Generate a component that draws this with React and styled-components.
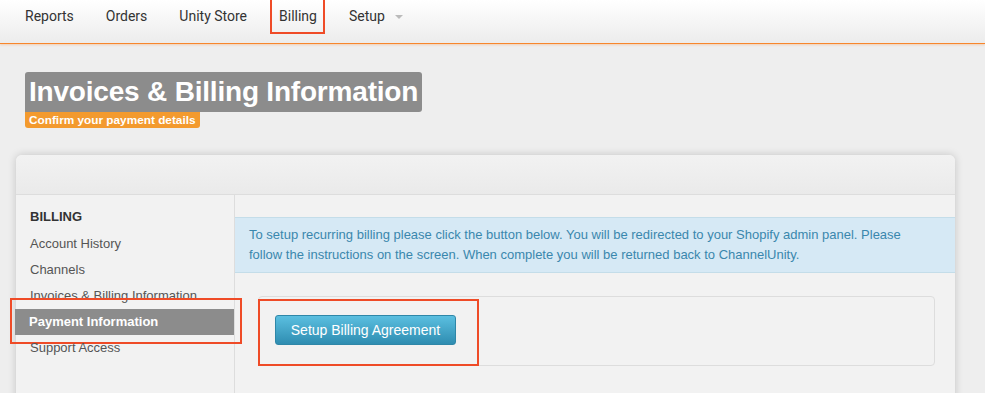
import React from 'react'
import styled, { createGlobalStyle } from 'styled-components'

const GlobalStyle = createGlobalStyle`
    html, body {
        margin: 0;
        padding: 0;
        background: #eeeeee;
        font-family: "Liberation Sans", Arial, sans-serif;
    }
`

const navItems = ['Reports', 'Orders', 'Unity Store', 'Billing', 'Setup']

const sideItems = [
    'Account History',
    'Channels',
    'Invoices & Billing Information',
    'Payment Information',
    'Support Access',
]

function App() {
    return (
        <Page>
            <GlobalStyle />
            <TopNav>
                {navItems.map(item => (
                    <NavItem key={item}>
                        {item}
                        {item === 'Setup' && <Caret />}
                        {item === 'Billing' && <Marker style={{ top: -13, bottom: -10, left: -9, right: -8 }} />}
                    </NavItem>
                ))}
            </TopNav>

            <Heading>
                <Title>Invoices &amp; Billing Information</Title>
                <Subtitle>Confirm your payment details</Subtitle>
            </Heading>

            <Panel>
                <PanelHeader />
                <PanelBody>
                    <Sidebar>
                        <SideTitle>BILLING</SideTitle>
                        {sideItems.map(item => (
                            <SideItem key={item} active={item === 'Payment Information'}>
                                {item}
                                {item === 'Payment Information' && (
                                    <Marker style={{ top: -11, bottom: -9, left: -5, right: -8 }} />
                                )}
                            </SideItem>
                        ))}
                    </Sidebar>
                    <Content>
                        <Alert>
                            To setup recurring billing please click the button below. You will be redirected to your Shopify admin panel. Please<br />
                            follow the instructions on the screen. When complete you will be returned back to ChannelUnity.
                        </Alert>
                        <Well>
                            <Button>
                                Setup Billing Agreement
                            </Button>
                            <Marker style={{ top: 2, bottom: -1, left: -1, width: 217 }} />
                        </Well>
                    </Content>
                </PanelBody>
            </Panel>
        </Page>
    )
}

export default App

const Page = styled.div`
    height: 393px;
    overflow: hidden;
`

const TopNav = styled.div`
    height: 43px;
    display: flex;
    align-items: center;
    gap: 32px;
    padding: 0 0 0 25px;
    background: linear-gradient(#ffffff, #ececec);
    border-bottom: 1px solid #f7862c;
    box-shadow: 0 1px 2px rgba(247, 134, 44, 0.3);
    box-sizing: content-box;
`

const NavItem = styled.div`
    position: relative;
    display: flex;
    align-items: center;
    font-family: Roboto, "Liberation Sans", sans-serif;
    font-size: 14px;
    color: #333;
    margin-top: -12px;
`

const Caret = styled.span`
    margin-left: 10px;
    margin-top: 2px;
    border-left: 4px solid transparent;
    border-right: 4px solid transparent;
    border-top: 4px solid #bbbbbb;
`

const Marker = styled.span`
    position: absolute;
    border: 2px solid #ef4b27;
    pointer-events: none;
`

const Heading = styled.div`
    padding: 28px 0 0 25px;
    display: flex;
    flex-direction: column;
    align-items: flex-start;
`

const Title = styled.h1`
    margin: 0;
    padding: 0 4px;
    height: 40px;
    line-height: 40px;
    background: #8c8c8c;
    color: #fff;
    font-size: 28px;
    font-weight: bold;
    letter-spacing: -0.2px;
    border-radius: 3px 3px 3px 0;
`

const Subtitle = styled.div`
    height: 16px;
    line-height: 16px;
    padding: 0 4px;
    background: #f39a2e;
    color: #fff;
    font-size: 11.8px;
    font-weight: bold;
    border-radius: 0 0 3px 3px;
`

const Panel = styled.div`
    margin: 27px 30px 0 16px;
    background: #f2f2f2;
    border-radius: 6px 6px 0 0;
    box-shadow: 0 0 8px rgba(0, 0, 0, 0.18);
`

const PanelHeader = styled.div`
    height: 39px;
    border-radius: 6px 6px 0 0;
    background: linear-gradient(#f2f2f2, #eaeaea);
    border-bottom: 1px solid #dddddd;
`

const PanelBody = styled.div`
    display: flex;
    min-height: 240px;
`

const Sidebar = styled.div`
    width: 218px;
    border-right: 1px solid #dddddd;
    padding-top: 13px;
`

const SideTitle = styled.div`
    padding-left: 14px;
    font-size: 13px;
    font-weight: bold;
    color: #333;
    line-height: 18px;
    margin-bottom: 5px;
`

const SideItem = styled.div`
    position: relative;
    padding-left: 14px;
    height: 26px;
    line-height: 26px;
    font-size: 13px;
    color: ${props => props.active ? '#fff' : '#555'};
    font-weight: ${props => props.active ? 'bold' : 'normal'};
    background: ${props => props.active ? '#8c8c8c' : 'transparent'};
    margin-left: ${props => props.active ? '-1px' : '0'};
`

const Content = styled.div`
    flex: 1;
    padding-top: 22px;
`

const Alert = styled.div`
    background: #d6e9f5;
    border-top: 1px solid #c4dde9;
    border-bottom: 1px solid #c4dde9;
    color: #3a87ad;
    font-size: 13px;
    line-height: 20px;
    padding: 7px 14px;
    white-space: nowrap;
`

const Well = styled.div`
    position: relative;
    margin: 23px 20px 0 23px;
    border: 1px solid #dddddd;
    border-radius: 4px;
    padding: 18px 16px 0;
    box-sizing: border-box;
    height: 70px;
`

const Button = styled.button`
    width: 181px;
    height: 30px;
    border: 1px solid #2f87a8;
    border-radius: 3px;
    background: linear-gradient(#5bbfe0, #2f8db1);
    color: #fff;
    font-family: "Liberation Sans", sans-serif;
    font-size: 14px;
    padding: 0;
    cursor: pointer;
`
